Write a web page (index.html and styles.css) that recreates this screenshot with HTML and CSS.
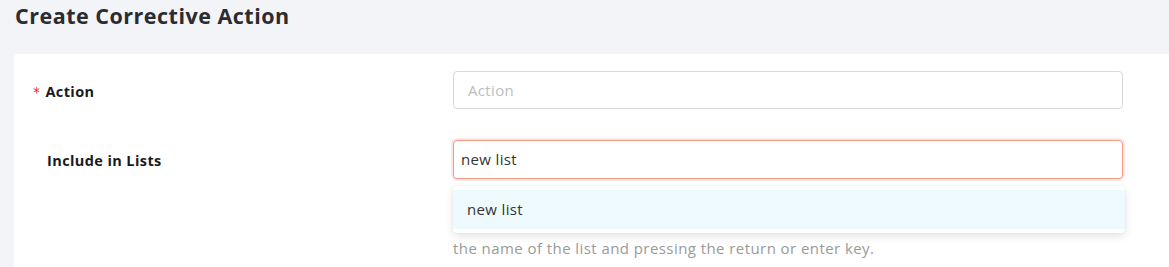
FILE: index.html
```html
<!DOCTYPE html>
<html>
<head>
<meta charset="utf-8">
<link rel="stylesheet" href="styles.css">
</head>
<body>
<div class="page">
  <h1 class="title">Create Corrective Action</h1>
  <div class="card">
    <div class="row">
      <label class="label"><span class="req">*</span>Action</label>
      <div class="field">
        <input class="input" type="text" placeholder="Action">
      </div>
    </div>
    <div class="row row-lists">
      <label class="label label-plain">Include in Lists</label>
      <div class="field">
        <div class="input input-focus">new list</div>
        <div class="dropdown">
          <div class="option">new list</div>
        </div>
        <p class="help">the name of the list and pressing the return or enter key.</p>
      </div>
    </div>
  </div>
</div>
</body>
</html>
```

FILE: styles.css
```css
* { box-sizing: border-box; }
html, body { margin: 0; padding: 0; }
body {
  background: #f3f4f8;
  font-family: "Open Sans", Lato, sans-serif;
  color: #222;
  width: 1169px;
  height: 267px;
  overflow: hidden;
}
.page { padding: 0 0 0 14px; }
.title {
  margin: 0;
  height: 54px;
  padding-top: 2px;
  padding-left: 1px;
  font-size: 21.5px;
  letter-spacing: 0.5px;
  line-height: 28px;
  font-weight: 700;
  color: #2b2b30;
}
.card {
  background: #fff;
  border-radius: 4px 0 0 0;
  padding: 17px 0 0 19px;
  height: 213px;
}
.row {
  display: flex;
  align-items: flex-start;
}
.row-lists { margin-top: 31px; }
.label {
  width: 420px;
  height: 38px;
  flex: none;
  font-size: 14.5px;
  letter-spacing: 0.4px;
  font-weight: 700;
  line-height: 41px;
  color: #1a1a1d;
}
.label-plain { padding-left: 14px; }
.req {
  color: #f5222d;
  font-weight: 400;
  margin-right: 5px;
  font-family: "DejaVu Sans", sans-serif;
  font-size: 14px;
}
.field {
  width: 670px;
  flex: none;
  position: relative;
}
.input {
  display: block;
  width: 100%;
  height: 38px;
  border: 1px solid #d9d9d9;
  border-radius: 4px;
  padding: 0 14px;
  font-family: inherit;
  font-size: 15px;
  letter-spacing: 0.35px;
  line-height: 36px;
  color: #333;
  background: #fff;
  outline: none;
}
.input::placeholder { color: #bdbdbd; }
.input-focus {
  border-color: #f39a86;
  box-shadow: 0 0 0 2px rgba(245, 130, 105, 0.18);
  padding-left: 7px;
  height: 39px;
  line-height: 37px;
  color: #333;
}
.dropdown {
  position: absolute;
  left: 0;
  top: 46px;
  width: 672px;
  background: #fff;
  border-radius: 4px;
  padding: 4px 0;
  box-shadow: 0 3px 8px rgba(0, 0, 0, 0.12), 0 0 2px rgba(0, 0, 0, 0.06);
  z-index: 2;
}
.option {
  background: #effafe;
  height: 39px;
  line-height: 39px;
  padding-left: 14px;
  font-size: 15px;
  letter-spacing: 0.35px;
  color: #333;
}
.help {
  margin: 58px 0 0 0;
  font-size: 15px;
  letter-spacing: 0.43px;
  line-height: 22px;
  color: #9a9a9a;
}
```
